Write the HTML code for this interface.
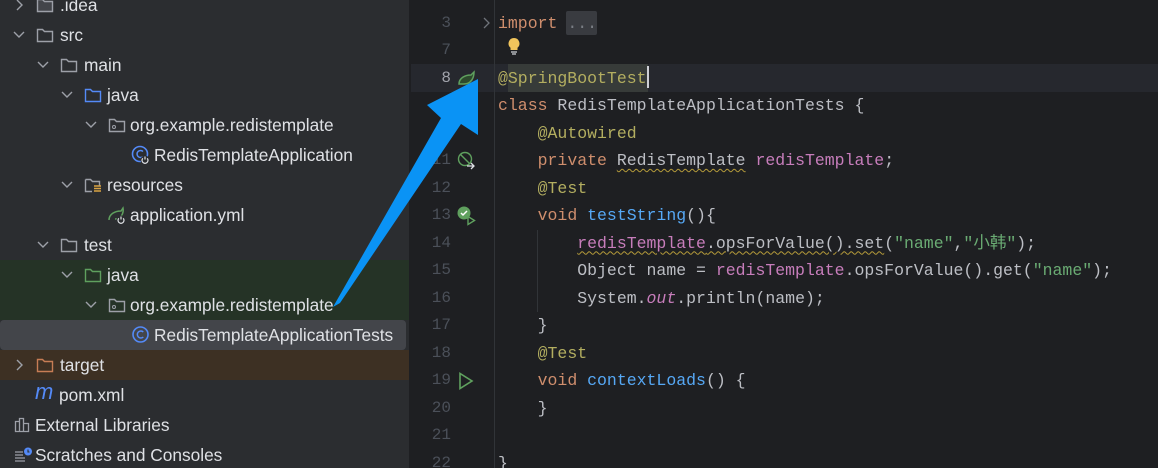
<!DOCTYPE html>
<html><head><meta charset="utf-8"><style>
*{margin:0;padding:0;box-sizing:border-box}
html,body{width:1158px;height:468px;overflow:hidden}
body{background:#1e1f22;position:relative;font-family:"Liberation Sans","Noto Sans CJK SC",sans-serif}
#tree{position:absolute;left:0;top:0;width:410px;height:468px;background:#2b2d30;border-right:1px solid #1e1f22;overflow:hidden}
.row{position:absolute;left:0;width:410px;height:30px;color:#dfe1e5;font-size:17.3px;line-height:30px;white-space:nowrap}
.row .t{position:absolute;top:0}
.chev{position:absolute;top:0;width:14px;height:30px}
.ic{position:absolute;top:7px;width:18px;height:16px}
#ed{position:absolute;left:411px;top:0;width:747px;height:468px;background:#1e1f22;overflow:hidden}
.ln{position:absolute;left:0;width:40px;text-align:right;color:#4b5059;font-family:"Liberation Mono",monospace;font-size:16px;height:27.5px;line-height:27.5px}
.code{position:absolute;left:87px;font-family:"Liberation Mono","Noto Sans CJK SC",monospace;font-size:16.5px;height:27.5px;line-height:27.5px;color:#bcbec4;white-space:pre}
.k{color:#cf8e6d}.a{color:#b3ae60}.f{color:#56a8f5}.p{color:#c77dbb}.s{color:#6aab73}.w{text-decoration:underline wavy #b59b3a;text-underline-offset:3px;text-decoration-thickness:1px}
</style></head><body>
<div id="tree">
<div style="position:absolute;left:0;top:260px;width:410px;height:60px;background:#253326"></div>
<div style="position:absolute;left:0;top:320px;width:406px;height:30px;background:#43454a;border-radius:4px"></div>
<div style="position:absolute;left:0;top:350px;width:410px;height:30px;background:#3d3023"></div>

<div class="row" style="top:-10px"><svg class="chev" style="left:12px" viewBox="0 0 14 30"><path d="M5 10l5 5-5 5" stroke="#9da0a8" stroke-width="1.4" fill="none"/></svg><svg class="ic" style="left:36px" viewBox="0 0 18 16"><path d="M1.5 2.5h5l2 2h8v10h-15z" stroke="#9da0a8" stroke-width="1.4" fill="#43454a"/></svg><span class="t" style="left:60px">.idea</span></div>
<div class="row" style="top:20px"><svg class="chev" style="left:12px" viewBox="0 0 14 30"><path d="M2 12l5 5 5-5" stroke="#9da0a8" stroke-width="1.4" fill="none"/></svg><svg class="ic" style="left:36px" viewBox="0 0 18 16"><path d="M1.5 2.5h5l2 2h8v10h-15z" stroke="#9da0a8" stroke-width="1.4" fill="none"/></svg><span class="t" style="left:60px">src</span></div>
<div class="row" style="top:50px"><svg class="chev" style="left:36px" viewBox="0 0 14 30"><path d="M2 12l5 5 5-5" stroke="#9da0a8" stroke-width="1.4" fill="none"/></svg><svg class="ic" style="left:60px" viewBox="0 0 18 16"><path d="M1.5 2.5h5l2 2h8v10h-15z" stroke="#9da0a8" stroke-width="1.4" fill="none"/></svg><span class="t" style="left:84px">main</span></div>
<div class="row" style="top:80px"><svg class="chev" style="left:60px" viewBox="0 0 14 30"><path d="M2 12l5 5 5-5" stroke="#9da0a8" stroke-width="1.4" fill="none"/></svg><svg class="ic" style="left:84px" viewBox="0 0 18 16"><path d="M1.5 2.5h5l2 2h8v10h-15z" stroke="#548af7" stroke-width="1.4" fill="none"/></svg><span class="t" style="left:107px">java</span></div>
<div class="row" style="top:110px"><svg class="chev" style="left:84px" viewBox="0 0 14 30"><path d="M2 12l5 5 5-5" stroke="#9da0a8" stroke-width="1.4" fill="none"/></svg><svg class="ic" style="left:108px" viewBox="0 0 18 16"><path d="M1.5 2.5h5l2 2h8v10h-15z" stroke="#9da0a8" stroke-width="1.4" fill="none"/><circle cx="6" cy="10" r="1.5" stroke="#9da0a8" fill="none"/></svg><span class="t" style="left:130px">org.example.redistemplate</span></div>
<div class="row" style="top:140px"><svg class="ic" style="left:131px;width:20px;height:20px;top:5px" viewBox="0 0 20 20"><circle cx="9" cy="9" r="7.5" stroke="#548af7" stroke-width="1.6" fill="none"/><path d="M12 6.5a3.5 3.5 0 1 0 0 5" stroke="#548af7" stroke-width="1.5" fill="none"/><circle cx="14" cy="15" r="4.5" fill="#2b2d30"/><path d="M14 11.5v3M11.8 13.3a3 3 0 1 0 4.4 0" stroke="#dfe1e5" stroke-width="1.2" fill="none"/></svg><span class="t" style="left:154px">RedisTemplateApplication</span></div>
<div class="row" style="top:170px"><svg class="chev" style="left:60px" viewBox="0 0 14 30"><path d="M2 12l5 5 5-5" stroke="#9da0a8" stroke-width="1.4" fill="none"/></svg><svg class="ic" style="left:84px" viewBox="0 0 18 16"><path d="M1.5 2.5h5l2 2h7v4M8 14.5h-6.5v-12" stroke="#9da0a8" stroke-width="1.4" fill="none"/><path d="M10 9h7M10 11.5h7M10 14h7" stroke="#d9a343" stroke-width="1.4"/></svg><span class="t" style="left:107px">resources</span></div>
<div class="row" style="top:200px"><svg class="ic" style="left:107px;width:20px;height:20px;top:5px" viewBox="0 0 20 20"><path d="M2 15c0-6 6-9 12-9l2-3c1 5-2 11-8 11" stroke="#5fa05e" stroke-width="1.5" fill="none"/><circle cx="14" cy="15" r="4.5" fill="#2b2d30"/><path d="M14 11.5v3M11.8 13.3a3 3 0 1 0 4.4 0" stroke="#dfe1e5" stroke-width="1.2" fill="none"/></svg><span class="t" style="left:130px">application.yml</span></div>
<div class="row" style="top:230px"><svg class="chev" style="left:36px" viewBox="0 0 14 30"><path d="M2 12l5 5 5-5" stroke="#9da0a8" stroke-width="1.4" fill="none"/></svg><svg class="ic" style="left:60px" viewBox="0 0 18 16"><path d="M1.5 2.5h5l2 2h8v10h-15z" stroke="#9da0a8" stroke-width="1.4" fill="none"/></svg><span class="t" style="left:84px">test</span></div>
<div class="row" style="top:260px"><svg class="chev" style="left:60px" viewBox="0 0 14 30"><path d="M2 12l5 5 5-5" stroke="#9da0a8" stroke-width="1.4" fill="none"/></svg><svg class="ic" style="left:84px" viewBox="0 0 18 16"><path d="M1.5 2.5h5l2 2h8v10h-15z" stroke="#5fa05e" stroke-width="1.4" fill="none"/></svg><span class="t" style="left:107px">java</span></div>
<div class="row" style="top:290px"><svg class="chev" style="left:84px" viewBox="0 0 14 30"><path d="M2 12l5 5 5-5" stroke="#9da0a8" stroke-width="1.4" fill="none"/></svg><svg class="ic" style="left:108px" viewBox="0 0 18 16"><path d="M1.5 2.5h5l2 2h8v10h-15z" stroke="#9da0a8" stroke-width="1.4" fill="none"/><circle cx="6" cy="10" r="1.5" stroke="#9da0a8" fill="none"/></svg><span class="t" style="left:130px">org.example.redistemplate</span></div>
<div class="row" style="top:320px"><svg class="ic" style="left:131px;width:20px;height:20px;top:5px" viewBox="0 0 20 20"><circle cx="9.5" cy="9.5" r="7.5" stroke="#548af7" stroke-width="1.6" fill="none"/><path d="M12.3 7a3.5 3.5 0 1 0 0 5" stroke="#548af7" stroke-width="1.5" fill="none"/></svg><span class="t" style="left:154px">RedisTemplateApplicationTests</span></div>
<div class="row" style="top:350px"><svg class="chev" style="left:12px" viewBox="0 0 14 30"><path d="M5 10l5 5-5 5" stroke="#9da0a8" stroke-width="1.4" fill="none"/></svg><svg class="ic" style="left:36px" viewBox="0 0 18 16"><path d="M1.5 2.5h5l2 2h8v10h-15z" stroke="#c77d55" stroke-width="1.4" fill="none"/></svg><span class="t" style="left:60px">target</span></div>
<div class="row" style="top:380px"><span class="t" style="left:35px;color:#548af7;font-style:italic;font-size:22px;top:-3px">m</span><span class="t" style="left:59px">pom.xml</span></div>
<div class="row" style="top:410px"><svg class="ic" style="left:14px" viewBox="0 0 18 16"><path d="M1.5 4.5h4v10h-4zM5.5 1.5h4v13h-4zM9.5 6.5h5v8h-5z" stroke="#9da0a8" stroke-width="1.3" fill="none"/></svg><span class="t" style="left:35px">External Libraries</span></div>
<div class="row" style="top:440px"><svg class="ic" style="left:14px" viewBox="0 0 18 16"><path d="M1 5h8M1 8h8M1 11h10M1 14h10" stroke="#9da0a8" stroke-width="1.3"/><circle cx="14" cy="4.5" r="4" fill="#548af7"/><path d="M14 2.5v2.5h1.5" stroke="#2b2d30" stroke-width="1.1" fill="none"/></svg><span class="t" style="left:35px">Scratches and Consoles</span></div>
</div>

<div id="ed">
<div style="position:absolute;left:0;top:64px;width:747px;height:28px;background:#26282e"></div>
<div style="position:absolute;left:83px;top:0;width:1px;height:468px;background:#313438"></div>
<div style="position:absolute;left:126px;top:230px;width:1px;height:82px;background:#313438"></div>
<div style="position:absolute;left:155px;top:11px;width:31px;height:24px;background:#393b40;border-radius:2px"></div>
<div style="position:absolute;left:97px;top:64px;width:140px;height:28px;background:#373b39"></div>
<div style="position:absolute;left:236px;top:66px;width:2px;height:22px;background:#ced0d6"></div>
<svg style="position:absolute;left:69px;top:16px" width="14" height="14" viewBox="0 0 14 14"><path d="M4 2l5 5-5 5" stroke="#6f737a" stroke-width="1.3" fill="none"/></svg>
<svg style="position:absolute;left:95px;top:36px" width="16" height="20" viewBox="0 0 16 20"><path d="M8 2a5.5 5.5 0 0 0-3.5 9.7V14h7v-2.3A5.5 5.5 0 0 0 8 2z" fill="#f2c55c"/><path d="M5 16h6M6 18h4" stroke="#ced0d6" stroke-width="1.3"/></svg>
<svg style="position:absolute;left:46px;top:70px" width="20" height="16" viewBox="0 0 20 16"><path d="M2 14c0-6 6-9 12-9l3-3c0 6-3 12-10 12z" stroke="#5fa05e" stroke-width="1.5" fill="#2d4a2d"/></svg>
<svg style="position:absolute;left:46px;top:151px" width="20" height="20" viewBox="0 0 20 20"><circle cx="8" cy="8" r="6.5" stroke="#5fa05e" stroke-width="1.4" fill="none"/><path d="M3.5 3.5l9 9" stroke="#5fa05e" stroke-width="1.4"/><path d="M10 15h7M14 12l3 3-3 3" stroke="#dfe1e5" stroke-width="1.3" fill="none"/></svg>
<svg style="position:absolute;left:46px;top:206px" width="20" height="20" viewBox="0 0 20 20"><circle cx="7" cy="7" r="6.5" fill="#5fa05e"/><path d="M4 7l2 2 4-4" stroke="#fff" stroke-width="1.5" fill="none"/><path d="M11 10.5v8l6.5-4z" stroke="#5fa05e" stroke-width="1.4" fill="#1e1f22"/></svg>
<svg style="position:absolute;left:47px;top:372px" width="16" height="18" viewBox="0 0 16 18"><path d="M2 1.5v15l12-7.5z" stroke="#5fa05e" stroke-width="1.6" fill="none"/></svg>

<div class="ln" style="top:-18px">2</div>
<div class="ln" style="top:9.5px">3</div>
<div class="ln" style="top:37px">7</div>
<div class="ln" style="top:64.5px;color:#a1a3ab">8</div>
<div class="ln" style="top:147px">11</div>
<div class="ln" style="top:174.5px">12</div>
<div class="ln" style="top:202px">13</div>
<div class="ln" style="top:229.5px">14</div>
<div class="ln" style="top:257px">15</div>
<div class="ln" style="top:284.5px">16</div>
<div class="ln" style="top:312px">17</div>
<div class="ln" style="top:339.5px">18</div>
<div class="ln" style="top:367px">19</div>
<div class="ln" style="top:394.5px">20</div>
<div class="ln" style="top:422px">21</div>
<div class="ln" style="top:449.5px">22</div>

<div class="code" style="top:9.5px"><span class="k">import</span> <span style="color:#7a7e85">...</span></div>
<div class="code" style="top:64.5px"><span class="a">@SpringBootTest</span></div>
<div class="code" style="top:92px"><span class="k">class</span> RedisTemplateApplicationTests {</div>
<div class="code" style="top:119.5px">    <span class="a">@Autowired</span></div>
<div class="code" style="top:147px">    <span class="k">private</span> <span class="w">RedisTemplate</span> <span class="p">redisTemplate</span>;</div>
<div class="code" style="top:174.5px">    <span class="a">@Test</span></div>
<div class="code" style="top:202px">    <span class="k">void</span> <span class="f">testString</span>(){</div>
<div class="code" style="top:229.5px">        <span class="w"><span class="p">redisTemplate</span>.opsForValue().set</span>(<span class="s">"name"</span>,<span class="s">"小韩"</span>);</div>
<div class="code" style="top:257px">        Object name = <span class="p">redisTemplate</span>.opsForValue().get(<span class="s">"name"</span>);</div>
<div class="code" style="top:284.5px">        System.<span class="p" style="font-style:italic">out</span>.println(name);</div>
<div class="code" style="top:312px">    }</div>
<div class="code" style="top:339.5px">    <span class="a">@Test</span></div>
<div class="code" style="top:367px">    <span class="k">void</span> <span class="f">contextLoads</span>() {</div>
<div class="code" style="top:394.5px">    }</div>
<div class="code" style="top:449.5px">}</div>
</div>

<svg style="position:absolute;left:0;top:0" width="1158" height="468"><polygon points="333,307 441,118 427,105 478,79 478,135 461,124 340,303" fill="#0a93f5"/></svg>
</body></html>
